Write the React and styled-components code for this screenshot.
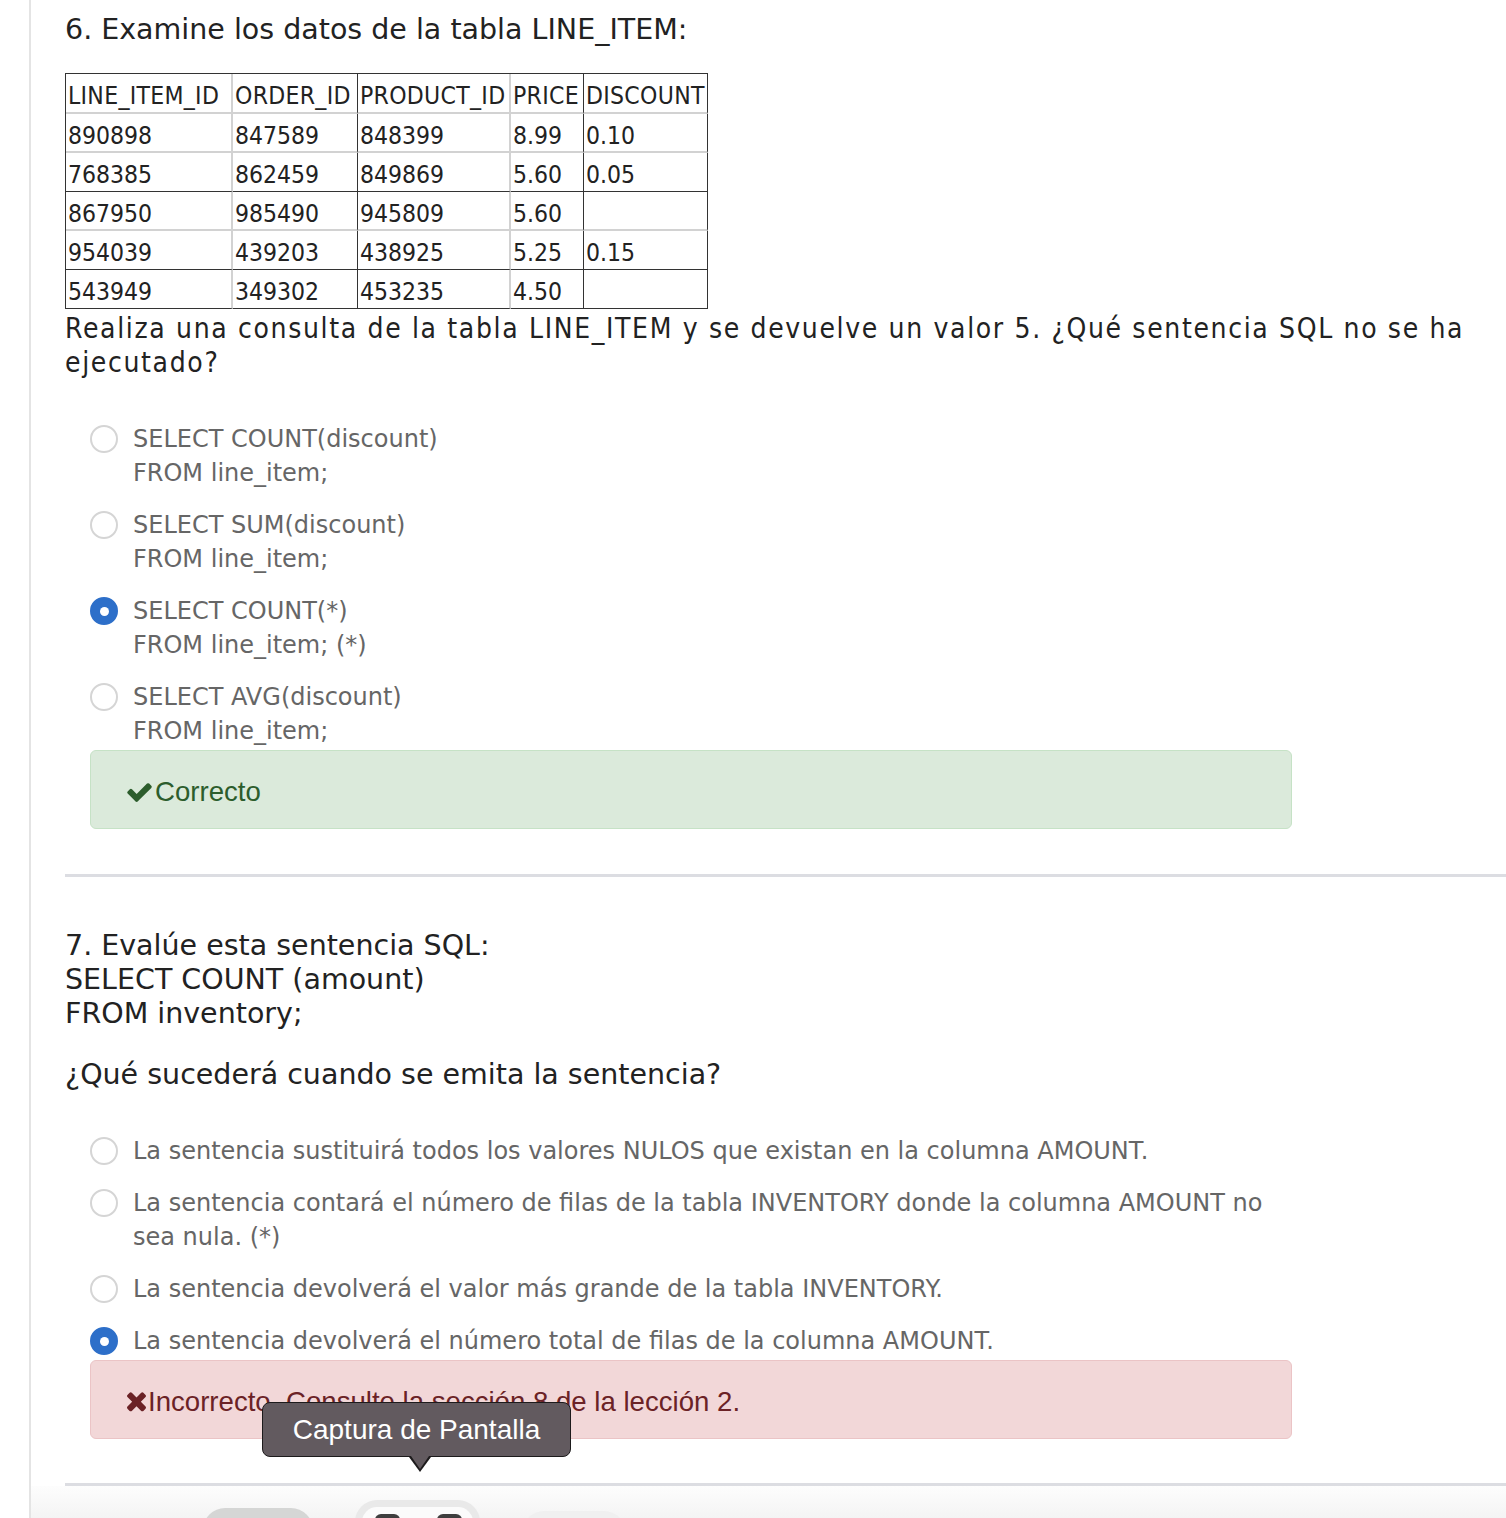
import React from "react";
import styled, { createGlobalStyle } from "styled-components";

const GlobalStyle = createGlobalStyle`
  body {
    margin: 0;
    background: #ffffff;
    font-family: "DejaVu Sans", Verdana, sans-serif;
  }
`;

const Page = styled.div`
  margin-left: 29px;
  border-left: 2px solid #e4e4e4;
  min-height: 1518px;
  overflow: hidden;
`;

const Content = styled.div`
  padding: 13px 0 0 34px;
`;

const Title = styled.div`
  font-size: 28.5px;
  line-height: 34px;
  color: #222;
  margin-top: ${(p) => p.$gap || 0}px;
`;

const Prompt = styled.div`
  font-family: "DejaVu Sans Condensed", "DejaVu Sans", sans-serif;
  font-size: 28px;
  letter-spacing: 1.65px;
  line-height: 34px;
  color: #222;
  margin-top: 3px;
  padding-right: 20px;
`;

const Table = styled.table`
  margin-top: 26px;
  table-layout: fixed;
  border-collapse: separate;
  border-spacing: 0;
  border-top: 1px solid #333;
  border-left: 1px solid #333;
  font-family: "DejaVu Sans Condensed", "DejaVu Sans", sans-serif;
  font-size: 24.5px;
  color: #222;
`;

const Row = styled.tr`
  height: ${(p) => (p.$head ? 40 : 39)}px;
`;

const Cell = styled.td`
  padding: 5px 2px 0;
  white-space: nowrap;
  text-align: left;
  font-weight: normal;
  vertical-align: middle;
  letter-spacing: ${(p) => (p.as === "th" ? "0.3px" : "0")};
  border-right: ${(p) => (p.$darkRight ? "1px solid #333" : "2px solid #d2d2d2")};
  border-bottom: ${(p) => (p.$darkBottom ? "1px solid #333" : "2px solid #d2d2d2")};
`;

const Options = styled.div`
  margin: 42px 0 0 25px;
  width: 1202px;
  display: flex;
  flex-direction: column;
  gap: 18px;
`;

const Option = styled.label`
  display: flex;
  align-items: flex-start;
  gap: 15px;
`;

const Radio = styled.span`
  flex: none;
  box-sizing: border-box;
  width: 28px;
  height: 28px;
  margin-top: 3px;
  border-radius: 50%;
  display: flex;
  align-items: center;
  justify-content: center;
  background: ${(p) => (p.$checked ? "#2d6fc9" : "#fff")};
  border: 2px solid ${(p) => (p.$checked ? "#2d6fc9" : "#d5d5d5")};

  &::after {
    content: "";
    display: ${(p) => (p.$checked ? "block" : "none")};
    width: 9px;
    height: 9px;
    border-radius: 50%;
    background: #fff;
  }
`;

const OptionText = styled.span`
  font-size: 24px;
  line-height: 34px;
  color: #666;
`;

const Feedback = styled.div`
  box-sizing: border-box;
  margin: 2px 0 0 25px;
  width: 1202px;
  height: 79px;
  border-radius: 6px;
  display: flex;
  align-items: center;
  padding: 5px 0 0 36px;
  font-family: "Liberation Sans", Arial, sans-serif;
  font-size: 27.6px;
  background: ${(p) => (p.$ok ? "#dbeadb" : "#f2d7d8")};
  border: 1px solid ${(p) => (p.$ok ? "#c6e2c6" : "#ebc4c6")};
  color: ${(p) => (p.$ok ? "#2c5d2c" : "#6b2226")};

  svg {
    flex: none;
    margin-right: ${(p) => (p.$ok ? 3 : 2)}px;
  }
`;

const Divider = styled.div`
  height: 3px;
  background: #dcdde2;
  margin-top: ${(p) => p.$gap}px;
`;

const Toolbar = styled.div`
  position: relative;
  height: 32px;
  display: flex;
  gap: 42px;
  padding-left: 172px;
  background: linear-gradient(#fdfdfd, #f4f4f4);
`;

const ToolButton = styled.div`
  box-sizing: border-box;
  width: ${(p) => p.$w}px;
  height: 44px;
  margin-top: ${(p) => p.$top}px;
  border-radius: 22px;
  background: ${(p) => p.$bg};
  display: flex;
  padding: 7px;
`;

const ToolInner = styled.div`
  flex: 1;
  border-radius: 16px;
  background: #fbfbfb;
  display: flex;
  gap: 37px;
  padding: 7px 0 0 13px;
`;

const Key = styled.span`
  width: 25px;
  height: 30px;
  border-radius: 6px;
  background: #3e3e3e;
`;

const Tooltip = styled.div`
  position: absolute;
  z-index: 2;
  left: 231px;
  top: -84px;
  box-sizing: border-box;
  width: 309px;
  height: 55px;
  border: 1.5px solid #1d1b1c;
  border-radius: 8px;
  background: #625a5f;
  color: #fff;
  font-family: "Liberation Sans", Arial, sans-serif;
  font-size: 28px;
  display: flex;
  align-items: center;
  justify-content: center;

  &::before,
  &::after {
    content: "";
    position: absolute;
    width: 0;
    height: 0;
    border-style: solid;
    border-color: transparent;
  }

  &::before {
    left: 146px;
    bottom: -16px;
    border-width: 15px 11px 0;
    border-top-color: #1d1b1c;
  }

  &::after {
    left: 148px;
    bottom: -13px;
    border-width: 13px 9px 0;
    border-top-color: #625a5f;
  }
`;

const CheckIcon = () => (
  <svg width="25" height="20" viewBox="120 262 1552 1264" fill="currentColor">
    <path d="M1671 566q0 40-28 68l-724 724-136 136q-28 28-68 28t-68-28l-136-136-362-362q-28-28-28-68t28-68l136-136q28-28 68-28t68 28l294 295 656-657q28-28 68-28t68 28l136 136q28 28 28 68z" />
  </svg>
);

const TimesIcon = () => (
  <svg width="19" height="20" viewBox="110 346 1188 1250" fill="currentColor">
    <path d="M1298 1322q0 40-28 68l-136 136q-28 28-68 28t-68-28l-294-294-294 294q-28 28-68 28t-68-28l-136-136q-28-28-28-68t28-68l294-294-294-294q-28-28-28-68t28-68l136-136q28-28 68-28t68 28l294 294 294-294q28-28 68-28t68 28l136 136q28 28 28 68t-28 68l-294 294 294 294q28 28 28 68z" />
  </svg>
);

const head = ["LINE_ITEM_ID", "ORDER_ID", "PRODUCT_ID", "PRICE", "DISCOUNT"];
const rows = [
  ["890898", "847589", "848399", "8.99", "0.10"],
  ["768385", "862459", "849869", "5.60", "0.05"],
  ["867950", "985490", "945809", "5.60", ""],
  ["954039", "439203", "438925", "5.25", "0.15"],
  ["543949", "349302", "453235", "4.50", ""],
];
// column widths without padding and border, so the table lands on 643px
const widths = [161, 120, 147, 68, 119];
const darkCols = [1, 3, 4];
const darkRows = [1, 3, 4];

const q6 = [
  ["SELECT COUNT(discount)", "FROM line_item;"],
  ["SELECT SUM(discount)", "FROM line_item;"],
  ["SELECT COUNT(*)", "FROM line_item; (*)"],
  ["SELECT AVG(discount)", "FROM line_item;"],
];

const q7 = [
  "La sentencia sustituirá todos los valores NULOS que existan en la columna AMOUNT.",
  "La sentencia contará el número de filas de la tabla INVENTORY donde la columna AMOUNT no sea nula. (*)",
  "La sentencia devolverá el valor más grande de la tabla INVENTORY.",
  "La sentencia devolverá el número total de filas de la columna AMOUNT.",
];

function App() {
  return (
    <>
      <GlobalStyle />
      <Page>
        <Content>
          <Title>6. Examine los datos de la tabla LINE_ITEM:</Title>
          <Table>
            <tbody>
              <Row $head>
                {head.map((h, i) => (
                  <Cell
                    as="th"
                    key={h}
                    style={{ width: widths[i] }}
                    $darkRight={darkCols.includes(i)}
                  >
                    {h}
                  </Cell>
                ))}
              </Row>
              {rows.map((r, ri) => (
                <Row key={ri}>
                  {r.map((c, ci) => (
                    <Cell
                      key={ci}
                      $darkRight={darkCols.includes(ci)}
                      $darkBottom={darkRows.includes(ri)}
                    >
                      {c}
                    </Cell>
                  ))}
                </Row>
              ))}
            </tbody>
          </Table>
          <Prompt>
            Realiza una consulta de la tabla LINE_ITEM y se devuelve un valor 5. ¿Qué
            sentencia SQL no se ha ejecutado?
          </Prompt>
          <Options>
            {q6.map((o, i) => (
              <Option key={i}>
                <Radio $checked={i === 2} />
                <OptionText>
                  {o[0]}
                  <br />
                  {o[1]}
                </OptionText>
              </Option>
            ))}
          </Options>
          <Feedback $ok>
            <CheckIcon />
            Correcto
          </Feedback>
          <Divider $gap={45} />

          <Title $gap={52}>
            7. Evalúe esta sentencia SQL:
            <br />
            SELECT COUNT (amount)
            <br />
            FROM inventory;
          </Title>
          <Title $gap={27}>¿Qué sucederá cuando se emita la sentencia?</Title>
          <Options>
            {q7.map((o, i) => (
              <Option key={i}>
                <Radio $checked={i === 3} />
                <OptionText>{o}</OptionText>
              </Option>
            ))}
          </Options>
          <Feedback>
            <TimesIcon />
            Incorrecto. Consulte la sección 8 de la lección 2.
          </Feedback>
          <Divider $gap={44} />
        </Content>
        <Toolbar>
          <Tooltip>Captura de Pantalla</Tooltip>
          <ToolButton $w={110} $top={22} $bg="#d5d6d5" />
          <ToolButton $w={125} $top={14} $bg="#e9e9e9">
            <ToolInner>
              <Key />
              <Key />
            </ToolInner>
          </ToolButton>
          <ToolButton $w={104} $top={25} $bg="#f0f0f0" />
        </Toolbar>
      </Page>
    </>
  );
}

export default App;
